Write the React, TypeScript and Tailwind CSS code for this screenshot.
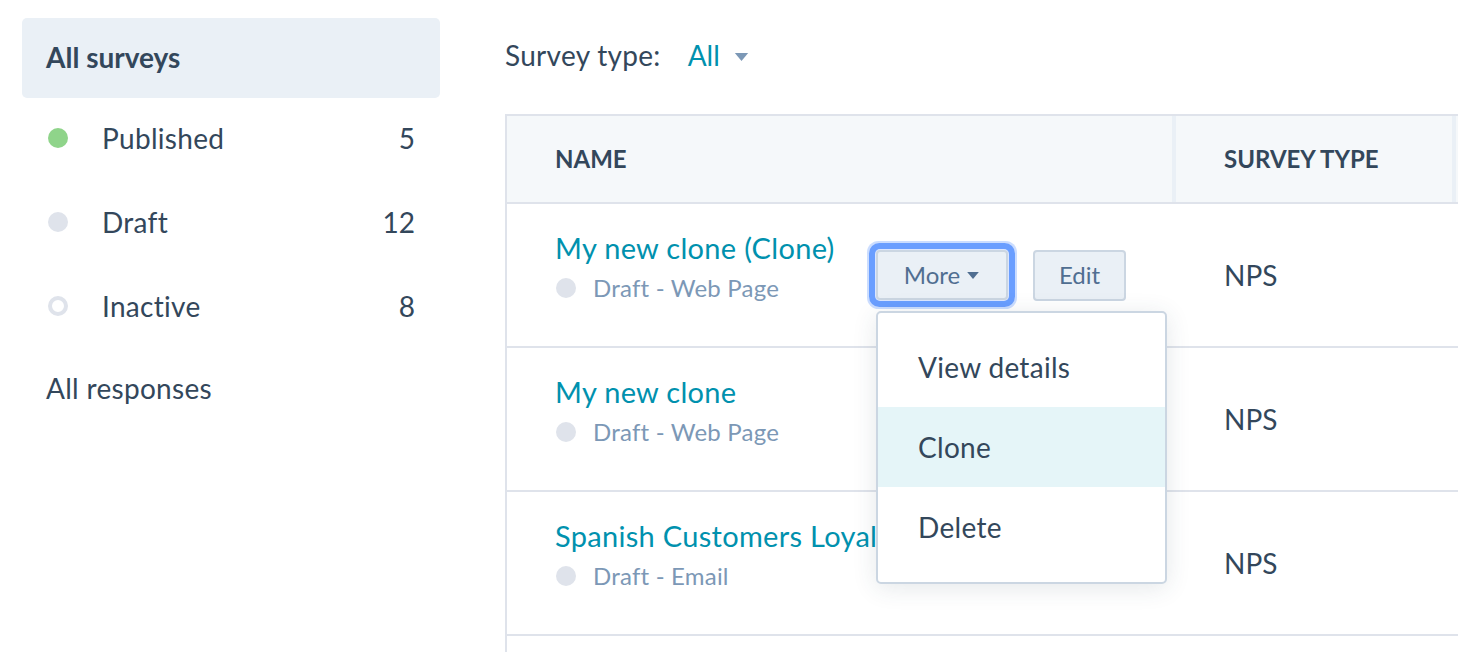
import React from "react";

const Caret = ({ className }: { className: string }) => (
  <svg viewBox="0 0 10 6" className={className}>
    <path d="M0 0 L10 0 L5 6 Z" fill="currentColor" />
  </svg>
);

function SideRow({ dot, label, count }: { dot: React.ReactNode; label: string; count: string }) {
  return (
    <div className="flex h-[84px] items-center pl-[26px] pr-[25px]">
      {dot}
      <span className="ml-[34px] flex-1 text-[28px] tracking-[0.3px] text-[#33475b]">{label}</span>
      <span className="text-[28px] text-[#33475b]">{count}</span>
    </div>
  );
}

function Row({
  title,
  sub,
  children,
}: {
  title: string;
  sub: string;
  children?: React.ReactNode;
}) {
  return (
    <div className="flex h-[144px] border-b-2 border-[#dfe3eb]">
      <div className="relative flex w-[667px] items-center">
        <div className="flex h-full flex-1 flex-col whitespace-nowrap pl-[48px] pt-[26px]">
          <div className="text-[29px] leading-[36px] tracking-[0.3px] text-[#0091ae]">{title}</div>
          <div className="mt-[4px] flex items-center text-[24px] leading-[36px] tracking-[0.2px] text-[#7c98b6]">
            <span className="ml-[1px] h-[20px] w-[20px] rounded-full bg-[#dfe3eb]" />
            <span className="ml-[17px]">{sub}</span>
          </div>
        </div>
        {children}
      </div>
      <div className="flex w-[4px]" />
      <div className="flex items-center pl-[46px] text-[28px] text-[#33475b]">NPS</div>
    </div>
  );
}

export default function App() {
  return (
    <div className="flex h-[652px] w-[1458px] overflow-hidden bg-white font-['Lato',sans-serif] text-[#33475b]">
      {/* Sidebar */}
      <div className="flex w-[440px] shrink-0 flex-col pl-[22px] pt-[18px]">
        <div className="flex h-[80px] items-center rounded-[5px] bg-[#eaf0f6] pb-[2px] pl-[24px] text-[28px] font-bold text-[#33475b]">
          All surveys
        </div>
        <div className="-mt-[2px] flex flex-col">
          <SideRow
            dot={<span className="h-[20px] w-[20px] rounded-full bg-[#8fd48a]" />}
            label="Published"
            count="5"
          />
          <SideRow
            dot={<span className="h-[20px] w-[20px] rounded-full bg-[#dfe3eb]" />}
            label="Draft"
            count="12"
          />
          <SideRow
            dot={<span className="h-[20px] w-[20px] rounded-full border-[4px] border-[#dfe3eb] bg-white" />}
            label="Inactive"
            count="8"
          />
          <div className="flex h-[80px] items-center pl-[24px] text-[28px] tracking-[0.3px] text-[#33475b]">
            All responses
          </div>
        </div>
      </div>

      {/* Main */}
      <div className="flex flex-1 flex-col pl-[65px]">
        <div className="flex h-[96px] shrink-0 items-center pt-[14px] text-[28px]">
          <span className="tracking-[0.3px] text-[#33475b]">Survey type:</span>
          <span className="ml-[27px] text-[#0091ae]">All</span>
          <Caret className="ml-[14px] mt-[3px] h-[8px] w-[15px] text-[#7c98b6]" />
        </div>
        <div className="mt-[18px] w-[1000px] border-l-2 border-t-2 border-[#dfe3eb]">
          {/* Header */}
          <div className="flex h-[88px] border-b-2 border-[#dfe3eb] bg-[#f5f8fa]">
            <div className="flex w-[665px] items-center pl-[48px] text-[24px] font-bold text-[#33475b]">NAME</div>
            <div className="w-[4px] bg-[#eaf0f6]" />
            <div className="flex w-[276px] items-center pl-[48px] text-[24px] font-bold text-[#33475b]">
              SURVEY TYPE
            </div>
            <div className="w-[4px] bg-[#eaf0f6]" />
          </div>

          <Row title="My new clone (Clone)" sub="Draft - Web Page">
            <div className="relative z-10 flex shrink-0 items-center gap-[25px] pr-[48px]">
              <div className="relative">
                <button className="flex h-[50px] w-[132px] items-center justify-center rounded-[4px] border-2 border-[#cbd6e2] bg-[#eaf0f6] text-[24px] text-[#506e91] shadow-[0_0_0_1px_#dbe6ff,0_0_0_7px_#6a9eff,0_0_0_9px_rgba(106,158,255,0.35)]">
                  More
                  <Caret className="ml-[6px] h-[7px] w-[14px] text-[#506e91]" />
                </button>
                <div className="absolute left-0 top-[61px] w-[291px] rounded-[5px] border-2 border-[#cbd6e2] bg-white pb-[15px] pt-[14px] shadow-[0_4px_24px_rgba(45,62,80,0.12)]">
                  <div className="flex h-[80px] items-center pl-[40px] text-[28px] tracking-[0.3px] text-[#33475b]">
                    View details
                  </div>
                  <div className="flex h-[80px] items-center bg-[#e5f5f8] pl-[40px] text-[28px] tracking-[0.3px] text-[#33475b]">
                    Clone
                  </div>
                  <div className="flex h-[80px] items-center pl-[40px] text-[28px] tracking-[0.3px] text-[#33475b]">
                    Delete
                  </div>
                </div>
              </div>
              <button className="flex h-[51px] w-[93px] items-center justify-center rounded-[4px] border-2 border-[#cbd6e2] bg-[#eaf0f6] text-[24px] text-[#506e91]">
                Edit
              </button>
            </div>
          </Row>
          <Row title="My new clone" sub="Draft - Web Page" />
          <Row title="Spanish Customers Loyalty Survey" sub="Draft - Email" />
          <div className="h-[40px]" />
        </div>
      </div>
    </div>
  );
}
